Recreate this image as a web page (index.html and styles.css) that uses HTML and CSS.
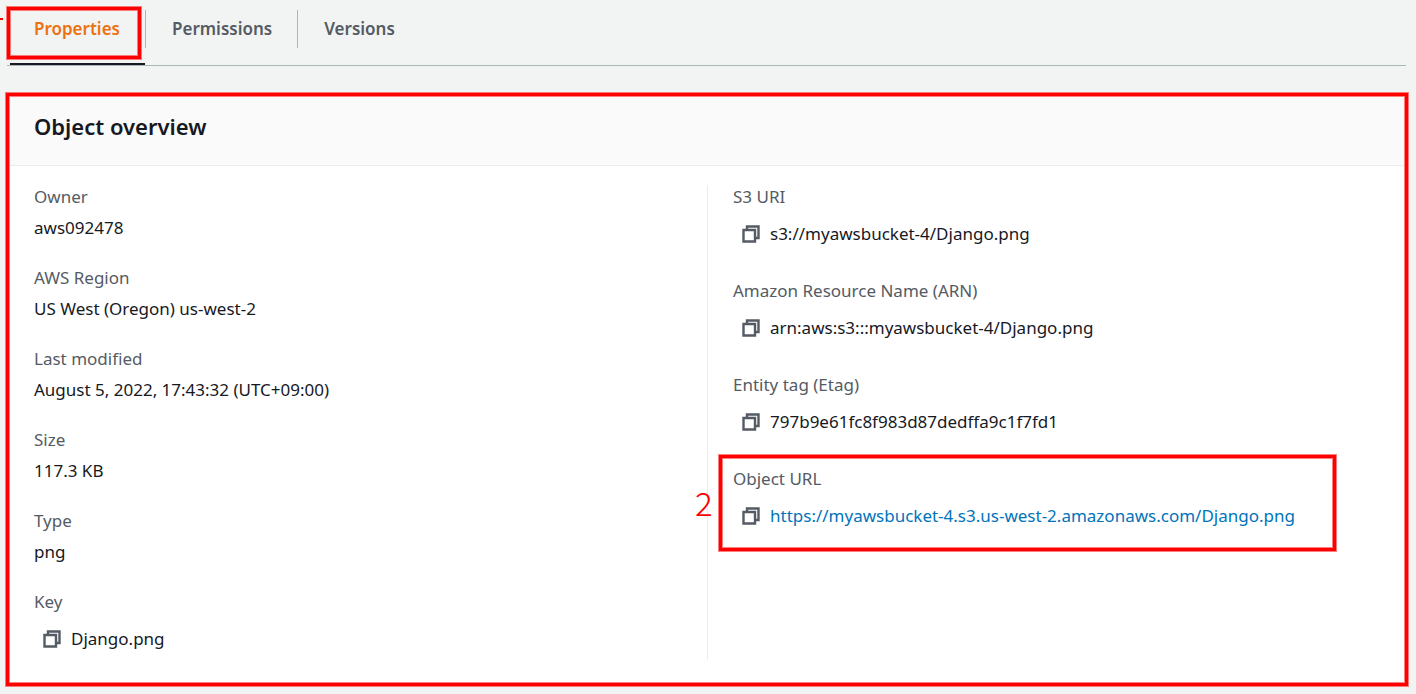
FILE: index.html
```html
<!DOCTYPE html>
<html lang="en">
<head>
<meta charset="utf-8">
<title>Object overview</title>
<link rel="stylesheet" href="styles.css">
</head>
<body>
<svg class="sprite" aria-hidden="true">
  <symbol id="copy" viewBox="0 0 18 18">
    <path d="M5 5V1.5H16.5V13H13M1.5 5H13V16.5H1.5Z" fill="none" stroke="currentColor" stroke-width="2.4"/>
  </symbol>
</svg>
<span class="step-dash" aria-hidden="true"></span>
<nav class="tabs">
  <button class="tab tab-active" type="button">Properties<span class="frame tab-frame"></span></button>
  <button class="tab" type="button">Permissions</button>
  <button class="tab" type="button">Versions</button>
</nav>
<main class="card frame">
  <header class="card-header"><h2 class="card-title">Object overview</h2></header>
  <div class="card-body">
    <dl class="column">
      <div class="item"><dt>Owner</dt><dd>aws092478</dd></div>
      <div class="item"><dt>AWS Region</dt><dd>US West (Oregon) us-west-2</dd></div>
      <div class="item"><dt>Last modified</dt><dd>August 5, 2022, 17:43:32 (UTC+09:00)</dd></div>
      <div class="item"><dt>Size</dt><dd>117.3 KB</dd></div>
      <div class="item"><dt>Type</dt><dd>png</dd></div>
      <div class="item"><dt>Key</dt><dd class="copy-row"><button class="copy" type="button" aria-label="Copy key"><svg class="icon"><use href="#copy"/></svg></button>Django.png</dd></div>
    </dl>
    <dl class="column column-right">
      <div class="item"><dt>S3 URI</dt><dd class="copy-row"><button class="copy" type="button" aria-label="Copy S3 URI"><svg class="icon"><use href="#copy"/></svg></button>s3://myawsbucket-4/Django.png</dd></div>
      <div class="item"><dt>Amazon Resource Name (ARN)</dt><dd class="copy-row"><button class="copy" type="button" aria-label="Copy ARN"><svg class="icon"><use href="#copy"/></svg></button>arn:aws:s3:::myawsbucket-4/Django.png</dd></div>
      <div class="item"><dt>Entity tag (Etag)</dt><dd class="copy-row"><button class="copy" type="button" aria-label="Copy Etag"><svg class="icon"><use href="#copy"/></svg></button>797b9e61fc8f983d87dedffa9c1f7fd1</dd></div>
      <div class="item url-item"><dt>Object URL</dt><dd class="copy-row"><button class="copy" type="button" aria-label="Copy object URL"><svg class="icon"><use href="#copy"/></svg></button><a class="url" href="https://myawsbucket-4.s3.us-west-2.amazonaws.com/Django.png">https://myawsbucket-4.s3.us-west-2.amazonaws.com/Django.png</a>
        <span class="frame url-frame"></span><span class="step">2</span></dd>
      </div>
    </dl>
  </div>
</main>
</body>
</html>
```
FILE: styles.css
```css
* { box-sizing: border-box; }
body {
  margin: 0;
  padding: 10px 8px 8px 6px;
  background: #f2f4f3;
  color: #16191f;
  font: 17px/24px "Noto Sans", sans-serif;
}
button { font: inherit; border: 0; background: none; padding: 0; cursor: pointer; }
.sprite { position: absolute; width: 0; height: 0; }

/* Tabs */
.tabs {
  display: flex;
  height: 56px;
  margin: 0 2px 0 1px;
  padding-left: 3px;
  border-bottom: 1px solid #aab7b8;
}
.tab {
  position: relative;
  height: 38px;
  padding: 0 25px 1px 26px;
  border-left: 1px solid #aab7b8;
  color: #545b64;
  font-weight: 600;
}
.tab-active {
  height: 55px;
  padding: 0 25px 16px 24px;
  border-left: 0;
  border-bottom: 2px solid #16191f;
  color: #ec7211;
}

/* Red highlight frames */
.frame {
  border: 3px solid #f00;
  box-shadow: 0 0 0 1px #ff000080, inset 0 0 0 1px #ff000080;
}
.tab-frame { position: absolute; inset: -3px 4px 4px -3px; }
.url-frame { position: absolute; inset: -12px 44px -17px -14px; }
.step {
  position: absolute;
  left: -38px;
  top: 15px;
  color: #f00;
  font: 300 33px/40px "Noto Sans CJK KR", sans-serif;
}
.step-dash { position: absolute; left: 0; top: 18px; width: 3px; height: 2px; background: #f00; }

/* Card */
.card { margin-top: 27px; padding: 1px; background: #fff; }
.card-header {
  padding: 14px 24px 24px;
  background: #fafafa;
  border-bottom: 1px solid #eaeded;
}
.card-title { margin: 0; font-size: 22px; line-height: 30px; font-weight: 600; }
.card-body {
  display: grid;
  grid-template-columns: 1fr 1fr;
  padding: 19px 24px 22px;
}
.column { display: flex; flex-direction: column; gap: 26px; margin: 0; padding-bottom: 3px; }
.column-right { gap: 27px; padding-left: 25px; border-left: 1px solid #eaeded; }
.item { position: relative; }
dt { margin-bottom: 7px; color: #545b64; }
dd { margin: 0; }
.copy-row { display: flex; align-items: center; height: 36px; padding-left: 9px; gap: 10px; }
.copy { display: flex; color: #545b64; }
.icon { width: 18px; height: 18px; }
.url { color: #0073bb; text-decoration: none; }
```
